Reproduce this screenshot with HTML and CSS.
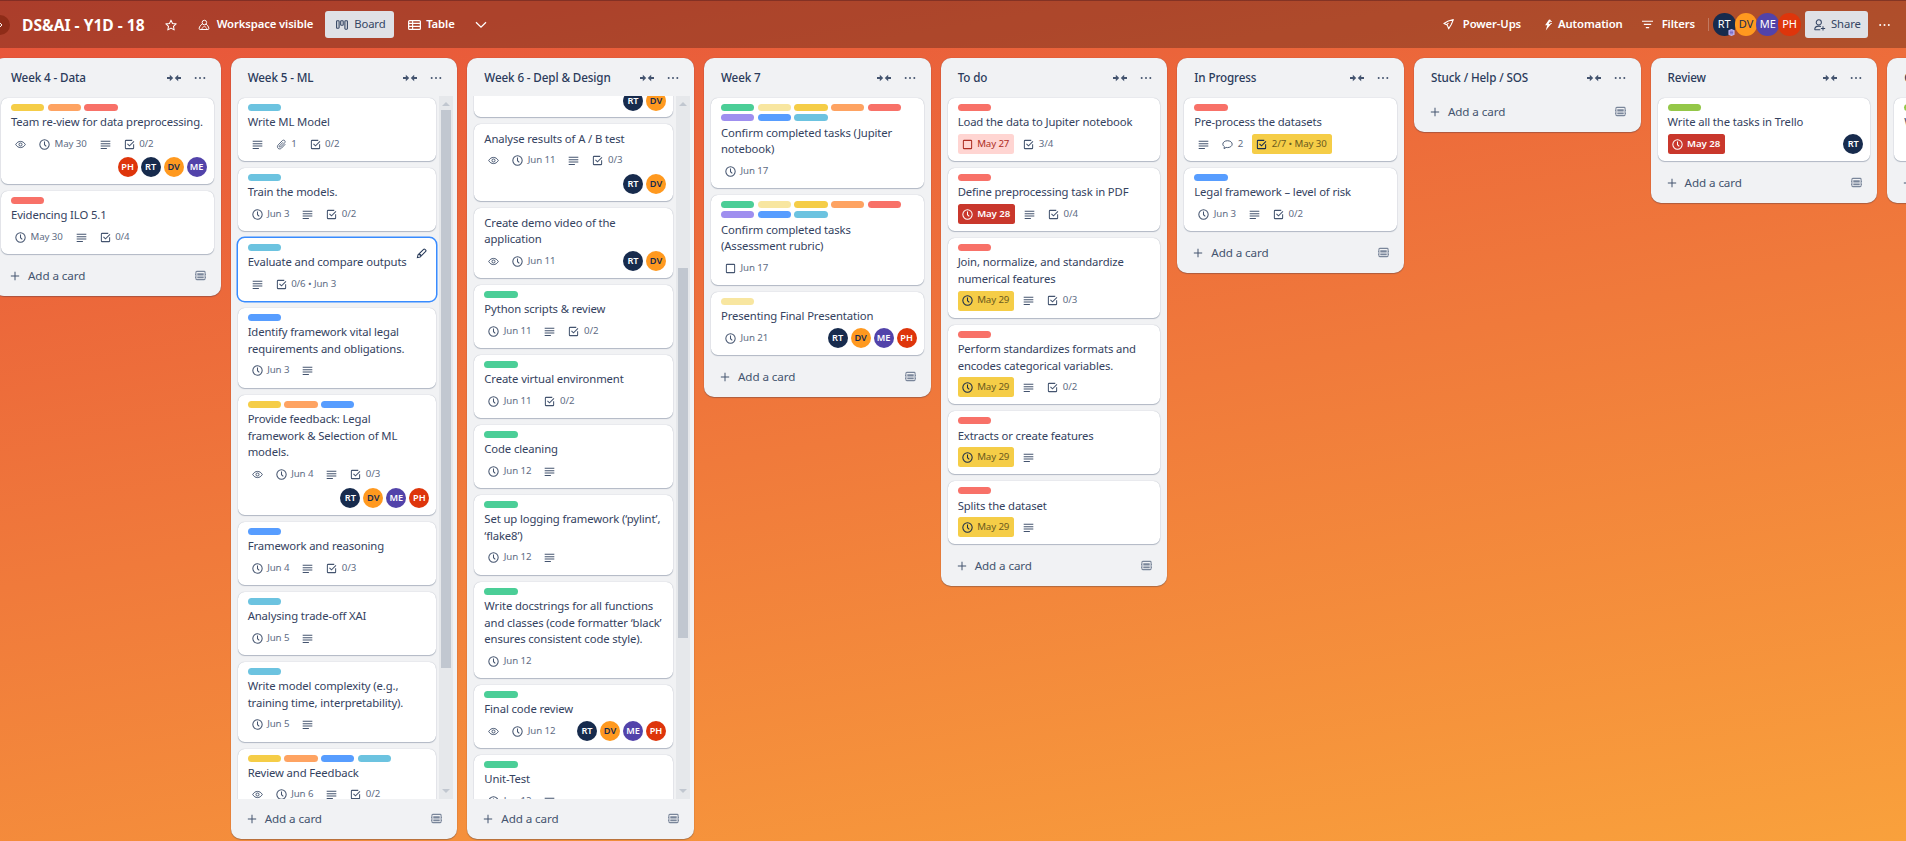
FILE: index.html
```html
<!DOCTYPE html>
<html lang="en">
<head>
<meta charset="utf-8">
<title>DS&amp;AI - Y1D - 18</title>
<link rel="stylesheet" href="styles.css">
</head>
<body>
<svg class="sprite" xmlns="http://www.w3.org/2000/svg">
  <symbol id="eye" viewBox="0 0 16 16"><path d="M1 8c1.8-3 4.2-4.5 7-4.5S13.200 5 15 8c-1.800 3-4.200 4.500-7 4.500S2.800 11 1 8z" fill="none" stroke="currentColor" stroke-width="1.400"/><circle cx="8" cy="8" r="2.200" fill="none" stroke="currentColor" stroke-width="1.400"/></symbol>
  <symbol id="clock" viewBox="0 0 16 16"><circle cx="8" cy="8" r="6.800" fill="none" stroke="currentColor" stroke-width="1.500"/><path d="M8 3.800V8.300l2.600 2.500" fill="none" stroke="currentColor" stroke-width="1.500"/></symbol>
  <symbol id="desc" viewBox="0 0 16 16"><path d="M1 2.500h14v1.500H1zM1 6h14v1.500H1zM1 9.500h14V11H1zM1 13h9v1.500H1z" fill="currentColor"/></symbol>
  <symbol id="check" viewBox="0 0 16 16"><path d="M14 7.500V13a1 1 0 0 1-1 1H3a1 1 0 0 1-1-1V3a1 1 0 0 1 1-1h9" fill="none" stroke="currentColor" stroke-width="1.500"/><path d="M5 7l3 3 6.500-6.500" fill="none" stroke="currentColor" stroke-width="1.500"/></symbol>
  <symbol id="box" viewBox="0 0 16 16"><rect x="2" y="2" width="12" height="12" rx="1" fill="none" stroke="currentColor" stroke-width="1.500"/></symbol>
  <symbol id="clip" viewBox="0 0 16 16"><path d="M13.500 7.500l-5.500 5.800c-1.500 1.500-3.700 1.500-5 .2s-1.200-3.400.2-4.900l6-6.200c1-1 2.500-1 3.400-.1s.9 2.300-.1 3.300l-5.800 6c-.5.500-1.200.5-1.700.1s-.4-1.200.1-1.700l5-5.200" fill="none" stroke="currentColor" stroke-width="1.300"/></symbol>
  <symbol id="comment" viewBox="0 0 16 16"><path d="M8 2.500c3.800 0 6.800 2.200 6.800 5s-3 5-6.800 5c-.7 0-1.400-.1-2-.2L3 14l.4-3C2 10 1.200 8.800 1.200 7.500c0-2.800 3-5 6.800-5z" fill="none" stroke="currentColor" stroke-width="1.400"/></symbol>
  <symbol id="plus" viewBox="0 0 12 12"><path d="M5.400 1h1.200v4.400H11v1.200H6.600V11H5.400V6.600H1V5.400h4.400z" fill="currentColor"/></symbol>
  <symbol id="tmpl" viewBox="0 0 12 12"><path d="M2 1.500h8a1 1 0 0 1 1 1v7a1 1 0 0 1-1 1H2a1 1 0 0 1-1-1v-7a1 1 0 0 1 1-1z" fill="none" stroke="currentColor" stroke-width="1.100"/><path d="M2.500 3.500h7v2.500h-7zM2.500 7.200h7v1.800h-7z" fill="currentColor"/><path d="M0 4h1v1.500H0zM11 4h1v1.500h-1zM0 7.300h1v1.500H0zM11 7.300h1v1.500h-1z" fill="currentColor"/></symbol>
  <symbol id="collapse" viewBox="0 0 14 8"><path d="M0 3.100h2.800V.8L6.200 4 2.800 7.200V4.900H0zM14 3.100h-2.800V.8L7.800 4l3.400 3.200V4.900H14z" fill="currentColor"/></symbol>
  <symbol id="dots" viewBox="0 0 12 4"><circle cx="1.700" cy="2" r="1" fill="currentColor"/><circle cx="6" cy="2" r="1" fill="currentColor"/><circle cx="10.300" cy="2" r="1" fill="currentColor"/></symbol>
  <symbol id="pencil" viewBox="0 0 12 12"><path d="M1.500 10.500l.7-3L8.300 1.400c.4-.4 1-.4 1.400 0l.9.900c.4.400.4 1 0 1.400L4.500 9.800z" fill="none" stroke="currentColor" stroke-width="1.100"/><path d="M3 7.200l1.800 1.800 1.200-1.300-1.700-1.800z" fill="currentColor"/></symbol>
  <symbol id="star" viewBox="0 0 16 16"><path d="M8 1.500l2 4.400 4.800.6-3.500 3.300.9 4.700L8 12.200l-4.200 2.300.9-4.700L1.200 6.500 6 5.900z" fill="none" stroke="currentColor" stroke-width="1.400" stroke-linejoin="round"/></symbol>
  <symbol id="team" viewBox="0 0 16 16"><circle cx="8.500" cy="4.700" r="3" fill="none" stroke="currentColor" stroke-width="1.300"/><path d="M5.800 6.500C3.500 8 2 10 1.500 12.500c-.2 1 .5 1.500 1.300 1.500h10.500c.8 0 1.400-.6 1.200-1.500-.5-2.500-2-4.500-4-6" fill="none" stroke="currentColor" stroke-width="1.300"/><path d="M5 14c.4-2 1.600-3.600 3.500-4.200 1.900.6 3 2.200 3.300 4.200" fill="none" stroke="currentColor" stroke-width="1.100"/></symbol>
  <symbol id="board" viewBox="0 0 12 12"><rect x=".6" y="1.800" width="2.500" height="7.400" rx=".6" fill="none" stroke="currentColor" stroke-width="1.100"/><rect x="4.700" y="1.800" width="2.500" height="4.500" rx=".6" fill="none" stroke="currentColor" stroke-width="1.100"/><rect x="8.900" y="1.800" width="2.500" height="8.400" rx=".6" fill="none" stroke="currentColor" stroke-width="1.100"/></symbol>
  <symbol id="table" viewBox="0 0 14 12"><rect x=".7" y="1.200" width="12.600" height="9.600" rx="1" fill="none" stroke="currentColor" stroke-width="1.300"/><path d="M.7 4.300h12.600M.7 7.500h12.600M5 1.200v9.600" fill="none" stroke="currentColor" stroke-width="1.200"/></symbol>
  <symbol id="chev" viewBox="0 0 12 8"><path d="M1 1.200l5 5 5-5" fill="none" stroke="currentColor" stroke-width="1.300"/></symbol>
  <symbol id="rocket" viewBox="0 0 12 12"><path d="M11.300.7L5.800 2.200 1 4.800l3 1.400.8 .8 1.400 3.700 2.800-4.700zM4 6.200l2-1.700" fill="none" stroke="currentColor" stroke-width="1.200" stroke-linejoin="round"/></symbol>
  <symbol id="bolt" viewBox="0 0 10 14"><path d="M6.300 0L1.400 7.400h2.700L2.200 14l6.600-8.300H5.700L8.800.6zM7.600 2.300H10v1H7zM7.800 4.400H10v1H7.200z" fill="currentColor"/></symbol>
  <symbol id="filter" viewBox="0 0 12 10"><path d="M0 .8h12V2H0zM2 4.300h8v1.200H2zM4.200 7.800h3.600V9H4.200z" fill="currentColor"/></symbol>
  <symbol id="share" viewBox="0 0 14 14"><circle cx="5.600" cy="4" r="3" fill="none" stroke="currentColor" stroke-width="1.200"/><path d="M.8 12.600c.1-2.900 1.800-4.300 4.800-4.300 1 0 1.800.2 2.500.5M.8 12.600h6.500" fill="none" stroke="currentColor" stroke-width="1.200"/><path d="M10.500 8.500v5M8 11h5" fill="none" stroke="currentColor" stroke-width="1.200"/></symbol>
  <symbol id="open" viewBox="0 0 6 8"><path d="M1 .6L4.400 4 1 7.400" fill="none" stroke="currentColor" stroke-width="1.500"/></symbol>
  <symbol id="admin" viewBox="0 0 8 8"><path d="M4 0l3.500 1.500v5L4 8 .5 6.500v-5z" fill="#C0B6F2"/><path d="M2 2.500h4M2 4h4M2 5.500h4" stroke="#5243AA" stroke-width=".7"/></symbol>
</svg>

<div class="app">
  <header class="bar">
    <button class="toggle"><svg class="tg"><use href="#open"/></svg></button>
    <h1 class="title">DS&amp;AI - Y1D - 18</h1>
    <svg class="nav-star"><use href="#star"/></svg>
    <div class="nav nav-vis"><svg class="i12"><use href="#team"/></svg>Workspace visible</div>
    <div class="nav nav-board"><svg class="i12"><use href="#board"/></svg>Board</div>
    <div class="nav nav-table"><svg class="i13"><use href="#table"/></svg>Table</div>
    <svg class="nav-chev"><use href="#chev"/></svg>
    <div class="bar-right">
      <div class="nav nav-power"><svg class="i11"><use href="#rocket"/></svg>Power-Ups</div>
      <div class="nav nav-auto"><svg class="i9"><use href="#bolt"/></svg>Automation</div>
      <div class="nav nav-filter"><svg class="i11"><use href="#filter"/></svg>Filters</div>
      <span class="divider"></span>
      <div class="members">
        <span class="member rt">RT<svg class="admin"><use href="#admin"/></svg></span>
        <span class="member dv">DV</span>
        <span class="member me">ME</span>
        <span class="member ph">PH</span>
      </div>
      <div class="nav nav-share"><svg class="i12"><use href="#share"/></svg>Share</div>
      <svg class="nav-dots"><use href="#dots"/></svg>
    </div>
  </header>

  <main class="boardarea">

    <section class="list">
      <div class="list-head"><h2>Week 4 - Data</h2><svg class="collapse"><use href="#collapse"/></svg><svg class="more"><use href="#dots"/></svg></div>
      <div class="list-body"><div class="cards">
        <article class="card">
          <div class="labels"><i class="l y"></i><i class="l o"></i><i class="l r"></i></div>
          <p>Team re-view for data preprocessing.</p>
          <div class="foot tight">
            <div class="badges"><span class="b"><svg><use href="#eye"/></svg></span><span class="b"><svg><use href="#clock"/></svg>May 30</span><span class="b"><svg><use href="#desc"/></svg></span><span class="b"><svg><use href="#check"/></svg>0/2</span></div>
            <div class="avs"><span class="av ph">PH</span><span class="av rt">RT</span><span class="av dv">DV</span><span class="av me">ME</span></div>
          </div>
        </article>
        <article class="card">
          <div class="labels"><i class="l r"></i></div>
          <p>Evidencing ILO 5.1</p>
          <div class="foot"><div class="badges"><span class="b"><svg><use href="#clock"/></svg>May 30</span><span class="b"><svg><use href="#desc"/></svg></span><span class="b"><svg><use href="#check"/></svg>0/4</span></div></div>
        </article>
      </div></div>
      <div class="list-foot"><svg class="plus"><use href="#plus"/></svg><span>Add a card</span><svg class="tmpl"><use href="#tmpl"/></svg></div>
    </section>

    <section class="list">
      <div class="list-head"><h2>Week 5 - ML</h2><svg class="collapse"><use href="#collapse"/></svg><svg class="more"><use href="#dots"/></svg></div>
      <div class="list-body"><div class="cards scrolling">
        <article class="card">
          <div class="labels"><i class="l s"></i></div>
          <p>Write ML Model</p>
          <div class="foot"><div class="badges"><span class="b"><svg><use href="#desc"/></svg></span><span class="b"><svg><use href="#clip"/></svg>1</span><span class="b"><svg><use href="#check"/></svg>0/2</span></div></div>
        </article>
        <article class="card">
          <div class="labels"><i class="l s"></i></div>
          <p>Train the models.</p>
          <div class="foot"><div class="badges"><span class="b"><svg><use href="#clock"/></svg>Jun 3</span><span class="b"><svg><use href="#desc"/></svg></span><span class="b"><svg><use href="#check"/></svg>0/2</span></div></div>
        </article>
        <article class="card active">
          <svg class="edit"><use href="#pencil"/></svg>
          <div class="labels"><i class="l s"></i></div>
          <p>Evaluate and compare outputs</p>
          <div class="foot"><div class="badges"><span class="b"><svg><use href="#desc"/></svg></span><span class="b"><svg><use href="#check"/></svg>0/6 • Jun 3</span></div></div>
        </article>
        <article class="card">
          <div class="labels"><i class="l b1"></i></div>
          <p>Identify framework vital legal requirements and obligations.</p>
          <div class="foot"><div class="badges"><span class="b"><svg><use href="#clock"/></svg>Jun 3</span><span class="b"><svg><use href="#desc"/></svg></span></div></div>
        </article>
        <article class="card">
          <div class="labels"><i class="l y"></i><i class="l o"></i><i class="l b1"></i></div>
          <p>Provide feedback: Legal framework &amp; Selection of ML models.</p>
          <div class="foot">
            <div class="badges"><span class="b"><svg><use href="#eye"/></svg></span><span class="b"><svg><use href="#clock"/></svg>Jun 4</span><span class="b"><svg><use href="#desc"/></svg></span><span class="b"><svg><use href="#check"/></svg>0/3</span></div>
            <div class="avs"><span class="av rt">RT</span><span class="av dv">DV</span><span class="av me">ME</span><span class="av ph">PH</span></div>
          </div>
        </article>
        <article class="card">
          <div class="labels"><i class="l b1"></i></div>
          <p>Framework and reasoning</p>
          <div class="foot"><div class="badges"><span class="b"><svg><use href="#clock"/></svg>Jun 4</span><span class="b"><svg><use href="#desc"/></svg></span><span class="b"><svg><use href="#check"/></svg>0/3</span></div></div>
        </article>
        <article class="card">
          <div class="labels"><i class="l s"></i></div>
          <p>Analysing trade-off XAI</p>
          <div class="foot"><div class="badges"><span class="b"><svg><use href="#clock"/></svg>Jun 5</span><span class="b"><svg><use href="#desc"/></svg></span></div></div>
        </article>
        <article class="card">
          <div class="labels"><i class="l s"></i></div>
          <p>Write model complexity (e.g., training time, interpretability).</p>
          <div class="foot"><div class="badges"><span class="b"><svg><use href="#clock"/></svg>Jun 5</span><span class="b"><svg><use href="#desc"/></svg></span></div></div>
        </article>
        <article class="card">
          <div class="labels"><i class="l y"></i><i class="l o"></i><i class="l b1"></i><i class="l s"></i></div>
          <p>Review and Feedback</p>
          <div class="foot"><div class="badges"><span class="b"><svg><use href="#eye"/></svg></span><span class="b"><svg><use href="#clock"/></svg>Jun 6</span><span class="b"><svg><use href="#desc"/></svg></span><span class="b"><svg><use href="#check"/></svg>0/2</span></div></div>
        </article>
      </div>
      <div class="sbar"><span class="up"></span><span class="thumb thumb-a"></span><span class="down"></span></div></div>
      <div class="list-foot"><svg class="plus"><use href="#plus"/></svg><span>Add a card</span><svg class="tmpl"><use href="#tmpl"/></svg></div>
    </section>

    <section class="list">
      <div class="list-head"><h2>Week 6 - Depl &amp; Design</h2><svg class="collapse"><use href="#collapse"/></svg><svg class="more"><use href="#dots"/></svg></div>
      <div class="list-body"><div class="cards scrolling">
        <article class="card plain offset">
          <div class="foot"><div class="avs"><span class="av rt">RT</span><span class="av dv">DV</span></div></div>
        </article>
        <article class="card plain">
          <p>Analyse results of A / B test</p>
          <div class="foot">
            <div class="badges"><span class="b"><svg><use href="#eye"/></svg></span><span class="b"><svg><use href="#clock"/></svg>Jun 11</span><span class="b"><svg><use href="#desc"/></svg></span><span class="b"><svg><use href="#check"/></svg>0/3</span></div>
            <div class="avs row"><span class="av rt">RT</span><span class="av dv">DV</span></div>
          </div>
        </article>
        <article class="card plain">
          <p>Create demo video of the application</p>
          <div class="foot">
            <div class="badges"><span class="b"><svg><use href="#eye"/></svg></span><span class="b"><svg><use href="#clock"/></svg>Jun 11</span></div>
            <div class="avs"><span class="av rt">RT</span><span class="av dv">DV</span></div>
          </div>
        </article>
        <article class="card">
          <div class="labels"><i class="l g"></i></div>
          <p>Python scripts &amp; review</p>
          <div class="foot"><div class="badges"><span class="b"><svg><use href="#clock"/></svg>Jun 11</span><span class="b"><svg><use href="#desc"/></svg></span><span class="b"><svg><use href="#check"/></svg>0/2</span></div></div>
        </article>
        <article class="card">
          <div class="labels"><i class="l g"></i></div>
          <p>Create virtual environment</p>
          <div class="foot"><div class="badges"><span class="b"><svg><use href="#clock"/></svg>Jun 11</span><span class="b"><svg><use href="#check"/></svg>0/2</span></div></div>
        </article>
        <article class="card">
          <div class="labels"><i class="l g"></i></div>
          <p>Code cleaning</p>
          <div class="foot"><div class="badges"><span class="b"><svg><use href="#clock"/></svg>Jun 12</span><span class="b"><svg><use href="#desc"/></svg></span></div></div>
        </article>
        <article class="card">
          <div class="labels"><i class="l g"></i></div>
          <p>Set up logging framework (‘pylint’, ‘flake8’)</p>
          <div class="foot"><div class="badges"><span class="b"><svg><use href="#clock"/></svg>Jun 12</span><span class="b"><svg><use href="#desc"/></svg></span></div></div>
        </article>
        <article class="card">
          <div class="labels"><i class="l g"></i></div>
          <p>Write docstrings for all functions and classes (code formatter ‘black’ ensures consistent code style).</p>
          <div class="foot"><div class="badges"><span class="b"><svg><use href="#clock"/></svg>Jun 12</span></div></div>
        </article>
        <article class="card">
          <div class="labels"><i class="l g"></i></div>
          <p>Final code review</p>
          <div class="foot">
            <div class="badges"><span class="b"><svg><use href="#eye"/></svg></span><span class="b"><svg><use href="#clock"/></svg>Jun 12</span></div>
            <div class="avs"><span class="av rt">RT</span><span class="av dv">DV</span><span class="av me">ME</span><span class="av ph">PH</span></div>
          </div>
        </article>
        <article class="card">
          <div class="labels"><i class="l g"></i></div>
          <p>Unit-Test</p>
          <div class="foot"><div class="badges"><span class="b"><svg><use href="#clock"/></svg>Jun 12</span><span class="b"><svg><use href="#desc"/></svg></span></div></div>
        </article>
      </div>
      <div class="sbar"><span class="up"></span><span class="thumb thumb-b"></span><span class="down"></span></div></div>
      <div class="list-foot"><svg class="plus"><use href="#plus"/></svg><span>Add a card</span><svg class="tmpl"><use href="#tmpl"/></svg></div>
    </section>

    <section class="list">
      <div class="list-head"><h2>Week 7</h2><svg class="collapse"><use href="#collapse"/></svg><svg class="more"><use href="#dots"/></svg></div>
      <div class="list-body"><div class="cards">
        <article class="card">
          <div class="labels"><i class="l g"></i><i class="l ly"></i><i class="l y"></i><i class="l o"></i><i class="l r"></i><i class="l p"></i><i class="l b1"></i><i class="l s"></i></div>
          <p>Confirm completed tasks (Jupiter notebook)</p>
          <div class="foot"><div class="badges"><span class="b"><svg><use href="#clock"/></svg>Jun 17</span></div></div>
        </article>
        <article class="card">
          <div class="labels"><i class="l g"></i><i class="l ly"></i><i class="l y"></i><i class="l o"></i><i class="l r"></i><i class="l p"></i><i class="l b1"></i><i class="l s"></i></div>
          <p>Confirm completed tasks (Assessment rubric)</p>
          <div class="foot"><div class="badges"><span class="b"><svg><use href="#box"/></svg>Jun 17</span></div></div>
        </article>
        <article class="card">
          <div class="labels"><i class="l ly"></i></div>
          <p>Presenting Final Presentation</p>
          <div class="foot">
            <div class="badges"><span class="b"><svg><use href="#clock"/></svg>Jun 21</span></div>
            <div class="avs"><span class="av rt">RT</span><span class="av dv">DV</span><span class="av me">ME</span><span class="av ph">PH</span></div>
          </div>
        </article>
      </div></div>
      <div class="list-foot"><svg class="plus"><use href="#plus"/></svg><span>Add a card</span><svg class="tmpl"><use href="#tmpl"/></svg></div>
    </section>

    <section class="list">
      <div class="list-head"><h2>To do</h2><svg class="collapse"><use href="#collapse"/></svg><svg class="more"><use href="#dots"/></svg></div>
      <div class="list-body"><div class="cards">
        <article class="card">
          <div class="labels"><i class="l r"></i></div>
          <p>Load the data to Jupiter notebook</p>
          <div class="foot"><div class="badges"><span class="b tint soon"><svg><use href="#box"/></svg>May 27</span><span class="b"><svg><use href="#check"/></svg>3/4</span></div></div>
        </article>
        <article class="card">
          <div class="labels"><i class="l r"></i></div>
          <p>Define preprocessing task in PDF</p>
          <div class="foot"><div class="badges"><span class="b tint late"><svg><use href="#clock"/></svg>May 28</span><span class="b"><svg><use href="#desc"/></svg></span><span class="b"><svg><use href="#check"/></svg>0/4</span></div></div>
        </article>
        <article class="card">
          <div class="labels"><i class="l r"></i></div>
          <p>Join, normalize, and standardize numerical features</p>
          <div class="foot"><div class="badges"><span class="b tint due"><svg><use href="#clock"/></svg>May 29</span><span class="b"><svg><use href="#desc"/></svg></span><span class="b"><svg><use href="#check"/></svg>0/3</span></div></div>
        </article>
        <article class="card">
          <div class="labels"><i class="l r"></i></div>
          <p>Perform standardizes formats and encodes categorical variables.</p>
          <div class="foot"><div class="badges"><span class="b tint due"><svg><use href="#clock"/></svg>May 29</span><span class="b"><svg><use href="#desc"/></svg></span><span class="b"><svg><use href="#check"/></svg>0/2</span></div></div>
        </article>
        <article class="card">
          <div class="labels"><i class="l r"></i></div>
          <p>Extracts or create features</p>
          <div class="foot"><div class="badges"><span class="b tint due"><svg><use href="#clock"/></svg>May 29</span><span class="b"><svg><use href="#desc"/></svg></span></div></div>
        </article>
        <article class="card">
          <div class="labels"><i class="l r"></i></div>
          <p>Splits the dataset</p>
          <div class="foot"><div class="badges"><span class="b tint due"><svg><use href="#clock"/></svg>May 29</span><span class="b"><svg><use href="#desc"/></svg></span></div></div>
        </article>
      </div></div>
      <div class="list-foot"><svg class="plus"><use href="#plus"/></svg><span>Add a card</span><svg class="tmpl"><use href="#tmpl"/></svg></div>
    </section>

    <section class="list">
      <div class="list-head"><h2>In Progress</h2><svg class="collapse"><use href="#collapse"/></svg><svg class="more"><use href="#dots"/></svg></div>
      <div class="list-body"><div class="cards">
        <article class="card">
          <div class="labels"><i class="l r"></i></div>
          <p>Pre-process the datasets</p>
          <div class="foot"><div class="badges"><span class="b"><svg><use href="#desc"/></svg></span><span class="b"><svg><use href="#comment"/></svg>2</span><span class="b tint due"><svg><use href="#check"/></svg>2/7 • May 30</span></div></div>
        </article>
        <article class="card">
          <div class="labels"><i class="l b1"></i></div>
          <p>Legal framework – level of risk</p>
          <div class="foot"><div class="badges"><span class="b"><svg><use href="#clock"/></svg>Jun 3</span><span class="b"><svg><use href="#desc"/></svg></span><span class="b"><svg><use href="#check"/></svg>0/2</span></div></div>
        </article>
      </div></div>
      <div class="list-foot"><svg class="plus"><use href="#plus"/></svg><span>Add a card</span><svg class="tmpl"><use href="#tmpl"/></svg></div>
    </section>

    <section class="list">
      <div class="list-head"><h2>Stuck / Help / SOS</h2><svg class="collapse"><use href="#collapse"/></svg><svg class="more"><use href="#dots"/></svg></div>
      <div class="list-foot"><svg class="plus"><use href="#plus"/></svg><span>Add a card</span><svg class="tmpl"><use href="#tmpl"/></svg></div>
    </section>

    <section class="list">
      <div class="list-head"><h2>Review</h2><svg class="collapse"><use href="#collapse"/></svg><svg class="more"><use href="#dots"/></svg></div>
      <div class="list-body"><div class="cards">
        <article class="card">
          <div class="labels"><i class="l lm"></i></div>
          <p>Write all the tasks in Trello</p>
          <div class="foot">
            <div class="badges"><span class="b tint late"><svg><use href="#clock"/></svg>May 28</span></div>
            <div class="avs"><span class="av rt">RT</span></div>
          </div>
        </article>
      </div></div>
      <div class="list-foot"><svg class="plus"><use href="#plus"/></svg><span>Add a card</span><svg class="tmpl"><use href="#tmpl"/></svg></div>
    </section>

    <section class="list">
      <div class="list-head"><h2>Completed</h2><svg class="collapse"><use href="#collapse"/></svg><svg class="more"><use href="#dots"/></svg></div>
      <div class="list-body"><div class="cards">
        <article class="card">
          <div class="labels"><i class="l lm"></i></div>
          <p>Write the report</p>
          <div class="foot"><div class="badges"><span class="b"><svg><use href="#clock"/></svg>May 28</span></div></div>
        </article>
      </div></div>
      <div class="list-foot"><svg class="plus"><use href="#plus"/></svg><span>Add a card</span><svg class="tmpl"><use href="#tmpl"/></svg></div>
    </section>

  </main>
</div>
</body>
</html>
```

FILE: styles.css
```css
* { box-sizing: border-box; }
html, body { height: 100%; }
body {
  margin: 0;
  overflow: hidden;
  background: linear-gradient(170deg, #E7533A 0%, #F9A13C 100%);
  font-family: "Noto Sans", "Open Sans", sans-serif;
  font-size: 11.67px;
  line-height: 16.67px;
  color: #253858;
}
.sprite { position: absolute; width: 0; height: 0; }
.app { display: flex; flex-direction: column; height: 100vh; }

/* Board header */
.bar {
  flex: none;
  height: 48px;
  display: flex;
  align-items: center;
  background: rgba(0, 0, 0, .26);
  border-top: 1px solid rgba(90, 30, 30, .5);
  color: #fff;
  font-weight: 600;
  font-size: 11.3px;
  letter-spacing: -.12px;
}
.toggle {
  flex: none;
  width: 20px;
  height: 20px;
  margin-left: -10px;
  padding: 0 0 0 9px;
  border: 0;
  border-radius: 50%;
  background: #8E2C18;
  color: #fff;
  display: flex;
  align-items: center;
}
.tg { width: 4px; height: 6px; }
.title { margin: 0 0 0 12px; font-size: 15.6px; line-height: 20px; font-weight: 700; letter-spacing: 0; white-space: nowrap; }
.nav-star { width: 12px; height: 12px; margin-left: 20px; flex: none; }
.nav { display: flex; align-items: center; height: 27px; white-space: nowrap; }
.nav svg { flex: none; }
.i9 { width: 8px; height: 12px; margin-right: 6px; }
.i11 { width: 11px; height: 11px; margin-right: 9px; }
.i12 { width: 12px; height: 12px; margin-right: 7px; }
.i13 { width: 13px; height: 12px; margin-right: 5px; }
.nav-vis { margin-left: 21px; }
.nav-board, .nav-share {
  background: #DFE1E6;
  color: #344563;
  border-radius: 3px;
  font-weight: 400;
}
.nav-board { margin-left: 12px; width: 69px; padding-left: 11px; }
.nav-board .i12 { margin-right: 6px; }
.nav-table { margin-left: 14px; }
.nav-chev { width: 12px; height: 8px; margin-left: 20px; flex: none; }
.bar-right { margin-left: auto; display: flex; align-items: center; }
.nav-auto { margin-left: 23px; }
.nav-filter { margin-left: 19px; }
.divider { width: 1px; height: 13px; margin: 0 4px 0 13px; background: rgba(255, 255, 255, .25); }
.members { display: flex; }
.member {
  position: relative;
  width: 22.67px;
  height: 22.67px;
  border-radius: 50%;
  margin-right: -.9px;
  display: flex;
  align-items: center;
  justify-content: center;
  font-size: 11px;
  font-weight: 400;
  letter-spacing: 0;
}
.rt { background: #172B4D; color: #fff; }
.dv { background: #FF991F; color: #172B4D; }
.me { background: #5243AA; color: #fff; }
.ph { background: #DE350B; color: #fff; }
.admin { position: absolute; right: 1px; bottom: 0; width: 7px; height: 7px; }
.nav-share { margin-left: 5px; width: 63px; padding-left: 9px; }
.nav-share .i12 { margin-right: 5px; }
.nav-dots { width: 13px; height: 4px; margin: 0 15px 0 10px; flex: none; }

/* Board */
.boardarea {
  flex: 1;
  min-height: 0;
  display: flex;
  align-items: flex-start;
  gap: 10px;
  margin-left: -6px;
  padding: 10px 0 2px;
  overflow: hidden;
}
.list {
  flex: none;
  width: 226.67px;
  max-height: 100%;
  display: flex;
  flex-direction: column;
  background: #F1F2F4;
  border-radius: 10px;
  box-shadow: 0 1px 1px rgba(9, 30, 66, .25), 0 0 1px rgba(9, 30, 66, .31);
}
.list-head {
  flex: none;
  height: 34px;
  padding: 12px 15px 0 17px;
  display: flex;
  align-items: flex-start;
}
.list-head h2 {
  flex: 1;
  margin: 0;
  font-size: 11.67px;
  line-height: 16px;
  font-weight: 500;
  letter-spacing: -.12px;
  color: #2B3B5B;
  white-space: nowrap;
}
.collapse { flex: none; width: 14px; height: 8px; margin-top: 4px; color: #44546F; }
.more { flex: none; width: 12px; height: 4px; margin: 6px 0 0 13px; color: #44546F; }
.list-body { flex: 1; min-height: 0; display: flex; margin-top: 4px; }
.cards {
  flex: 1;
  min-width: 0;
  padding: 2px 7px;
  display: flex;
  flex-direction: column;
  gap: 7px;
  overflow: hidden;
}
.cards.scrolling { padding-right: 3px; }
.list-foot {
  flex: none;
  height: 40px;
  padding: 0 15px 0 16px;
  display: flex;
  align-items: center;
  color: #44546F;
}
.list-foot span { flex: 1; margin-left: 8px; letter-spacing: -.1px; }
.plus { width: 10px; height: 10px; }
.tmpl { width: 11px; height: 11px; color: #7A869A; margin-bottom: 2px; }

/* Scrollbar */
.sbar {
  flex: none;
  width: 14px;
  margin-right: 4px;
  background: #E6E8EB;
  display: flex;
  flex-direction: column;
  align-items: center;
}
.up, .down { flex: none; width: 0; height: 0; border: 4px solid transparent; }
.up { border-top: 0; border-bottom: 4px solid #C1C7D0; margin-top: 6px; }
.down { border-bottom: 0; border-top: 4px solid #C1C7D0; margin-top: auto; margin-bottom: 6px; }
.thumb { flex: none; width: 10px; background: #C1C7D0; }
.thumb-a { height: 558px; margin-top: 4px; }
.thumb-b { height: 370px; margin-top: 162px; }

/* Cards */
.card {
  position: relative;
  flex: none;
  padding: 6px 7px 7px 10px;
  background: #fff;
  border-radius: 6.67px;
  box-shadow: 0 1px 1px rgba(9, 30, 66, .25), 0 0 1px rgba(9, 30, 66, .31);
}
.card.plain { padding-top: 6.5px; }
.card.offset { margin-top: -14px; padding-top: 7px; padding-bottom: 6px; }
.card.active { box-shadow: 0 0 0 1.5px #388BFF; }
.edit { position: absolute; top: 10px; right: 9px; width: 11px; height: 11px; color: #253858; }
.card p { margin: 0 0 3px; font-size: 11.3px; letter-spacing: -.12px; color: #344260; }
.labels { display: flex; flex-wrap: wrap; gap: 3.33px; margin-bottom: 3.33px; }
.l { display: block; width: 33.33px; height: 7px; border-radius: 3.5px; }
.y { background: #F5CD47; }
.o { background: #FEA362; }
.r { background: #F87168; }
.b1 { background: #579DFF; }
.s { background: #6CC3E0; }
.g { background: #4BCE97; }
.ly { background: #F8E6A0; }
.p { background: #9F8FEF; }
.lm { background: #94C748; }
.foot { display: flex; flex-wrap: wrap; justify-content: space-between; row-gap: 4px; }
.foot.tight { row-gap: 3px; }
.badges { display: flex; }
.b {
  display: inline-flex;
  align-items: center;
  gap: 4.5px;
  height: 20px;
  padding: 0 4px;
  margin-right: 5px;
  font-size: 9.7px;
  letter-spacing: -.1px;
  color: #5E6C84;
  white-space: nowrap;
  border-radius: 2.5px;
}
.b svg { flex: none; width: 11px; height: 11px; color: #44546F; }
.tint { padding-right: 5px; margin-right: 5px; }
.due { background: #F5CD47; color: #6B5A1E; }
.due svg { color: #172B4D; }
.late { background: #C9372C; color: #fff; font-weight: 600; }
.late svg { color: #fff; }
.soon { background: #FFD5D2; color: #AE2E24; }
.soon svg { color: #AE2E24; }
.avs { display: flex; gap: 3px; margin-left: auto; }
.avs.row { flex-basis: 100%; justify-content: flex-end; }
.av {
  width: 20px;
  height: 20px;
  border-radius: 50%;
  display: flex;
  align-items: center;
  justify-content: center;
  font-size: 9.2px;
  font-weight: 600;
  letter-spacing: 0;
}
```
